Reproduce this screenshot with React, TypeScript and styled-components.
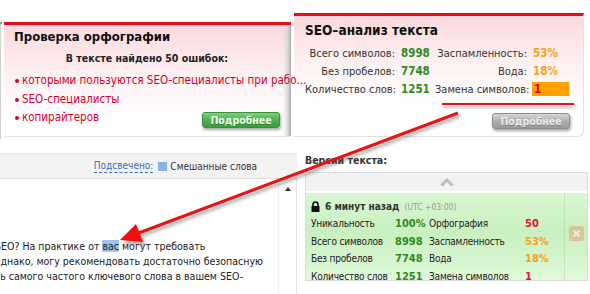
import React from "react";
import styled, { createGlobalStyle } from "styled-components";

const Global = createGlobalStyle`
  html, body { margin: 0; padding: 0; background: #fff; }
  body { width: 590px; height: 294px; overflow: hidden; }
`;

const FONT = `"DejaVu Sans Condensed", "DejaVu Sans", sans-serif`;

const Page = styled.div`
  position: relative;
  width: 590px;
  height: 294px;
  overflow: hidden;
  background: #fff;
  font-family: ${FONT};
  font-stretch: condensed;
  color: #333;
`;

const TopRow = styled.div`
  display: flex;
  align-items: flex-start;
  height: 150px;
`;

const EdgeStub = styled.div`
  margin-top: 22px;
  width: 1px;
  height: 115px;
  border-left: 1px solid #cfcfcf;
  border-top: 2px solid #3fae3f;
`;

const SpellCard = styled.section`
  margin-top: 22px;
  margin-left: 2px;
  width: 287px;
  height: 115px;
  box-sizing: border-box;
  border-top: 3px solid #e10e1e;
  border-bottom: 1px solid #e4e4e4;
  background:
    linear-gradient(to left, #a9a9a9 0px, #d8d8d8 3px, rgba(255,255,255,0) 8px),
    linear-gradient(to bottom, #fad9de 0%, #fdeef0 40%, #ffffff 85%);
  padding: 3px 11px 0 10px;
  display: flex;
  flex-direction: column;
`;

const CardTitle = styled.h2<{ $size: number }>`
  margin: 0;
  font-size: ${(p) => p.$size}px;
  line-height: 18px;
  font-weight: bold;
  color: #111;
`;

const SubTitle = styled.div`
  margin-top: 4px;
  text-align: center;
  font-size: 10.5px;
  line-height: 16px;
  font-weight: bold;
  color: #222;
`;

const BulletList = styled.ul`
  margin: 5px 0 0;
  padding: 0;
  list-style: none;
`;

const Bullet = styled.li`
  position: relative;
  padding-left: 8px;
  font-size: 11.5px;
  line-height: 18.5px;
  color: #d3002c;
  white-space: nowrap;
  &::before {
    content: "";
    position: absolute;
    left: 1px;
    top: 8px;
    width: 4px;
    height: 4px;
    border-radius: 50%;
    background: #d3002c;
  }
`;

const OverlayButtonRow = styled.div`
  margin-top: -15px;
  display: flex;
  justify-content: flex-end;
`;

const MoreButton = styled.button<{ $tone: "green" | "gray" }>`
  width: 78px;
  height: 16px;
  padding: 0;
  border: 1px solid ${(p) => (p.$tone === "green" ? "#3a8f3a" : "#8d8d8d")};
  border-radius: 3px;
  background: ${(p) =>
    p.$tone === "green"
      ? "linear-gradient(#7fd27f, #4db04d 50%, #3c9c3c)"
      : "linear-gradient(#d6d6d6, #b0b0b0 50%, #9a9a9a)"};
  box-shadow: 1px 2px 3px rgba(0, 0, 0, 0.35);
  color: ${(p) => (p.$tone === "green" ? "#eaffea" : "#ececec")};
  font-family: ${FONT};
  font-stretch: condensed;
  font-size: 10.5px;
  font-weight: bold;
  line-height: 14px;
  text-shadow: 0 1px 0 rgba(0, 0, 0, 0.25);
`;

const SeoCard = styled.section`
  margin-top: 13px;
  margin-left: 3px;
  width: 290px;
  height: 124px;
  box-sizing: border-box;
  border-top: 3px solid #e10e1e;
  border-right: 1px solid #e2e2e2;
  border-bottom: 1px solid #e2e2e2;
  border-bottom-right-radius: 6px;
  background: linear-gradient(to bottom, #fad9de 0%, #fdeef0 35%, #ffffff 75%);
  padding: 5px 0 0 11px;
  display: flex;
  flex-direction: column;
`;

const StatsGrid = styled.div`
  margin-top: 5px;
  display: grid;
  grid-template-columns: 90px 40px 92px 50px;
  grid-auto-rows: 18px;
  align-items: center;
  font-size: 11px;
`;

const StatLabel = styled.span`
  text-align: right;
  white-space: nowrap;
  color: #333;
`;

const StatValue = styled.span<{ $color: string; $boxed?: boolean }>`
  font-weight: bold;
  font-size: 11.5px;
  color: ${(p) => p.$color};
  white-space: nowrap;
  padding-left: ${(p) => (p.$boxed ? 2 : 6)}px;
  ${(p) =>
    p.$boxed
      ? `background:#ffa200; height:14px; line-height:14px; margin-left:5px; width:35px;`
      : ""}
`;

const Underline = styled.div`
  margin-top: 5px;
  margin-left: 137px;
  width: 132px;
  height: 2px;
  background: #e8101c;
  box-shadow: 1px 3px 3px rgba(0, 0, 0, 0.3);
`;

const ButtonRow = styled.div`
  margin-top: 8px;
  display: flex;
  justify-content: flex-end;
  padding-right: 13px;
`;

const BottomRow = styled.div`
  display: flex;
  align-items: flex-start;
`;

const EditorPanel = styled.div`
  width: 298px;
  margin-top: 3px;
  display: flex;
  flex-direction: column;
`;

const Toolbar = styled.div`
  height: 26px;
  box-sizing: border-box;
  border-top: 1px solid #e6e6e6;
  border-bottom: 1px solid #dedede;
  background: #f3f3f3;
  display: flex;
  align-items: center;
  justify-content: flex-end;
  gap: 3px;
  padding-right: 40px;
  font-size: 10px;
`;

const HighlightLink = styled.span`
  color: #3b6fb6;
  border-bottom: 1px dashed #3b6fb6;
  line-height: 12px;
`;

const Swatch = styled.span`
  width: 9px;
  height: 9px;
  background: #86b4e8;
  display: inline-block;
  margin-left: 2px;
`;

const EditorBody = styled.div`
  display: flex;
  height: 120px;
  border-right: 1px solid #e3e3e3;
`;

const TextArea = styled.div`
  flex: 1;
  overflow: hidden;
  padding-top: 60px;
  font-size: 10.5px;
  line-height: 15px;
  color: #222;
`;

const TextLine = styled.div<{ $shift: number }>`
  white-space: nowrap;
  margin-left: ${(p) => -p.$shift}px;
`;

const Mark = styled.span`
  background: #9fc3ec;
`;

const ScrollBar = styled.div`
  width: 18px;
  display: flex;
  justify-content: center;
  padding-top: 8px;
  box-sizing: border-box;
  background: #fdfdfd;
  border-left: 1px solid #f0f0f0;
`;

const UpTri = styled.div`
  width: 0;
  height: 0;
  border-left: 3px solid transparent;
  border-right: 3px solid transparent;
  border-bottom: 4px solid #333;
`;

const VersionsPanel = styled.div`
  margin-left: 8px;
  flex: 1;
  display: flex;
  flex-direction: column;
`;

const VersionsTitle = styled.div`
  margin-top: 3px;
  font-size: 10.5px;
  font-weight: bold;
  line-height: 15px;
  color: #333;
`;

const VersionsBox = styled.div`
  margin-top: 4px;
  margin-right: 2px;
  border: 1px solid #dcdcdc;
`;

const CollapseBar = styled.div`
  height: 18px;
  background: #f2f2f2;
  border-bottom: 2px solid #fff;
  display: flex;
  align-items: center;
  justify-content: center;
`;

const VersionCard = styled.div`
  display: flex;
  height: 87px;
  background: linear-gradient(to bottom, #d9f7d2 0%, #c9f0c0 45%, #d6f6cf 80%, #e2fadb 100%);
`;

const VersionMain = styled.div`
  flex: 1;
  padding: 5px 0 0 5px;
  border-right: 1px dotted #b9cfb5;
`;

const VersionHead = styled.div`
  display: flex;
  align-items: center;
  gap: 5px;
  height: 16px;
  font-size: 10px;
  font-weight: bold;
  color: #333;
`;

const Utc = styled.span`
  font-weight: normal;
  font-size: 8.5px;
  color: #999;
  margin-left: 2px;
`;

const VersionGrid = styled.div`
  display: grid;
  grid-template-columns: 84px 34px 96px 39px;
  grid-auto-rows: 17.5px;
  align-items: center;
  font-size: 10px;
  letter-spacing: -0.2px;
  margin-top: 1px;
`;

const VLabel = styled.span`
  color: #222;
  white-space: nowrap;
`;

const VValue = styled.span<{ $color: string }>`
  color: ${(p) => p.$color};
  font-weight: bold;
  font-size: 11px;
  letter-spacing: 0;
  white-space: nowrap;
`;

const VersionSide = styled.div`
  width: 22px;
  display: flex;
  align-items: center;
  justify-content: center;
  padding-bottom: 6px;
  box-sizing: border-box;
`;

const CloseBtn = styled.div`
  width: 15px;
  height: 15px;
  border-radius: 3px;
  background: #d6c89c;
  display: flex;
  align-items: center;
  justify-content: center;
`;

const ArrowOverlay = styled.svg`
  position: absolute;
  left: 0;
  top: 0;
  pointer-events: none;
`;

const GREEN = "#2e8b1e";
const ORANGE = "#f7a21b";
const RED = "#e5102a";

export default function App() {
  return (
    <Page>
      <Global />
      <TopRow>
        <EdgeStub />
        <SpellCard>
          <CardTitle $size={13}>Проверка орфографии</CardTitle>
          <SubTitle>В тексте найдено 50 ошибок:</SubTitle>
          <BulletList>
            <Bullet>которыми пользуются SEO-специалисты при рабо...</Bullet>
            <Bullet>SEO-специалисты</Bullet>
            <Bullet>копирайтеров</Bullet>
          </BulletList>
          <OverlayButtonRow>
            <MoreButton $tone="green">Подробнее</MoreButton>
          </OverlayButtonRow>
        </SpellCard>
        <SeoCard>
          <CardTitle $size={13.5}>SEO–анализ текста</CardTitle>
          <StatsGrid>
            <StatLabel>Всего символов:</StatLabel>
            <StatValue $color={GREEN}>8998</StatValue>
            <StatLabel>Заспамленность:</StatLabel>
            <StatValue $color={ORANGE}>53%</StatValue>
            <StatLabel>Без пробелов:</StatLabel>
            <StatValue $color={GREEN}>7748</StatValue>
            <StatLabel>Вода:</StatLabel>
            <StatValue $color={ORANGE}>18%</StatValue>
            <StatLabel>Количество слов:</StatLabel>
            <StatValue $color={GREEN}>1251</StatValue>
            <StatLabel>Замена символов:</StatLabel>
            <StatValue $color="#e00000" $boxed>1</StatValue>
          </StatsGrid>
          <Underline />
          <ButtonRow>
            <MoreButton $tone="gray">Подробнее</MoreButton>
          </ButtonRow>
        </SeoCard>
      </TopRow>
      <BottomRow>
        <EditorPanel>
          <Toolbar>
            <HighlightLink>Подсвечено:</HighlightLink>
            <Swatch />
            <span>Смешанные слова</span>
          </Toolbar>
          <EditorBody>
            <TextArea>
              <TextLine $shift={5}>
                SEO? На практике от <Mark>вас</Mark> могут требовать
              </TextLine>
              <TextLine $shift={7}>Однако, могу рекомендовать достаточно безопасную</TextLine>
              <TextLine $shift={46}>плотность самого частого ключевого слова в вашем SEO-</TextLine>
            </TextArea>
            <ScrollBar>
              <UpTri />
            </ScrollBar>
          </EditorBody>
        </EditorPanel>
        <VersionsPanel>
          <VersionsTitle>Версии текста:</VersionsTitle>
          <VersionsBox>
            <CollapseBar>
              <svg width="14" height="9" viewBox="0 0 14 9">
                <path d="M1.5 7.5 L7 2 L12.5 7.5" fill="none" stroke="#bdbdbd" strokeWidth="3" />
              </svg>
            </CollapseBar>
            <VersionCard>
              <VersionMain>
                <VersionHead>
                  <svg width="9" height="11" viewBox="0 0 9 11">
                    <path d="M2 5 V3.5 a2.5 2.5 0 0 1 5 0 V5" fill="none" stroke="#111" strokeWidth="1.6" />
                    <rect x="0.5" y="5" width="8" height="6" fill="#111" />
                  </svg>
                  <span>
                    6 минут назад <Utc>(UTC +03:00)</Utc>
                  </span>
                </VersionHead>
                <VersionGrid>
                  <VLabel>Уникальность</VLabel>
                  <VValue $color={GREEN}>100%</VValue>
                  <VLabel>Орфография</VLabel>
                  <VValue $color={RED}>50</VValue>
                  <VLabel>Всего символов</VLabel>
                  <VValue $color={GREEN}>8998</VValue>
                  <VLabel>Заспамленность</VLabel>
                  <VValue $color={ORANGE}>53%</VValue>
                  <VLabel>Без пробелов</VLabel>
                  <VValue $color={GREEN}>7748</VValue>
                  <VLabel>Вода</VLabel>
                  <VValue $color={ORANGE}>18%</VValue>
                  <VLabel>Количество слов</VLabel>
                  <VValue $color={GREEN}>1251</VValue>
                  <VLabel>Замена символов</VLabel>
                  <VValue $color={RED}>1</VValue>
                </VersionGrid>
              </VersionMain>
              <VersionSide>
                <CloseBtn>
                  <svg width="9" height="9" viewBox="0 0 9 9">
                    <path d="M1.5 1.5 L7.5 7.5 M7.5 1.5 L1.5 7.5" stroke="#f2ecd8" strokeWidth="2" />
                  </svg>
                </CloseBtn>
              </VersionSide>
            </VersionCard>
          </VersionsBox>
        </VersionsPanel>
      </BottomRow>
      <ArrowOverlay width="590" height="294" viewBox="0 0 590 294">
        <defs>
          <filter id="blur" x="-10%" y="-10%" width="120%" height="120%">
            <feGaussianBlur stdDeviation="1.5" />
          </filter>
        </defs>
        <g filter="url(#blur)" opacity="0.45">
          <line x1="460" y1="116" x2="138" y2="237" stroke="#555" strokeWidth="3" />
          <polygon points="123,244 139,228 146,246" fill="#555" />
        </g>
        <line x1="458" y1="113" x2="136" y2="234" stroke="#ee1111" strokeWidth="3" />
        <polygon points="120,240 136,224 143,242" fill="#ee1111" />
      </ArrowOverlay>
    </Page>
  );
}
